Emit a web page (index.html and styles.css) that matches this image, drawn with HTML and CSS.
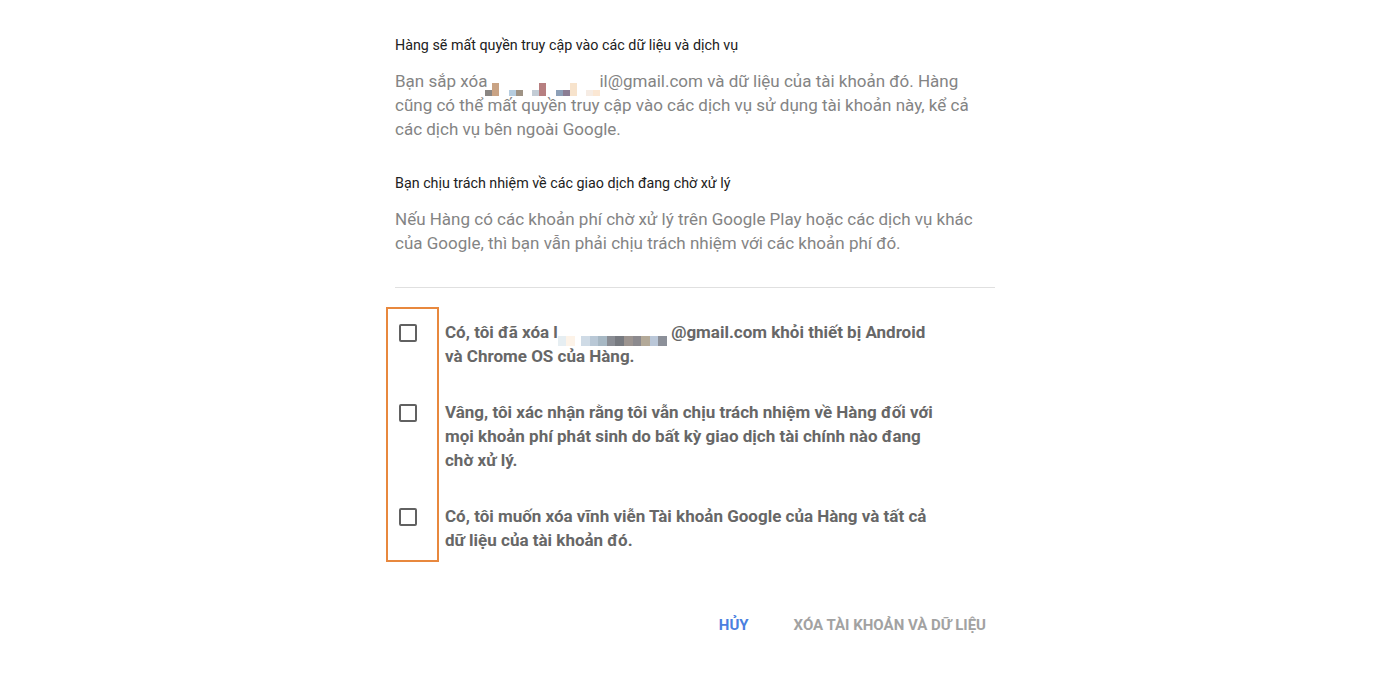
FILE: index.html
```html
<!DOCTYPE html>
<html lang="vi">
<head>
    <meta charset="utf-8">
    <title>Xóa Tài khoản Google</title>
    <link rel="stylesheet" href="styles.css">
</head>
<body>
    <div id="dialog">
        <div class="section">
            <div class="section-title">Hàng sẽ mất quyền truy cập vào các dữ liệu và dịch vụ</div>
            <div class="section-text">Bạn sắp xóa<span class="blur"><i class="px lo" style="background:#8a8683"></i><i class="px hi" style="background:#c9a384"></i><i class="sp"></i><i class="px lo" style="background:#b6cde0"></i><i class="px lo" style="background:#9f9385"></i><i class="sp"></i><i class="px lo" style="background:#c3ccd5"></i><i class="px hi" style="background:#b77f80"></i><i class="sp"></i><i class="px lo" style="background:#8da0b8"></i><i class="px lo" style="background:#8b7d93"></i><i class="px hi" style="background:#f7e3cc"></i><i class="sp"></i><i class="px lo" style="background:#f6ece4"></i><i class="px lo" style="background:#fbe7d3"></i></span>il@gmail.com và dữ liệu của tài khoản đó. Hàng cũng có thể mất quyền truy cập vào các dịch vụ sử dụng tài khoản này, kể cả các dịch vụ bên ngoài Google.</div>
        </div>
        <div class="section">
            <div class="section-title">Bạn chịu trách nhiệm về các giao dịch đang chờ xử lý</div>
            <div class="section-text">Nếu Hàng có các khoản phí chờ xử lý trên Google Play hoặc các dịch vụ khác của Google, thì bạn vẫn phải chịu trách nhiệm với các khoản phí đó.</div>
        </div>

        <div class="divider"></div>

        <div id="confirm-list">
            <div class="highlight"></div>
            <label class="confirm-row">
                <span class="checkbox"></span>
                <span class="confirm-text">Có, tôi đã xóa l<span class="blur mid"><i class="px md" style="background:#e6eef2"></i><i class="px md" style="background:#fdf3e8"></i><i class="sp2"></i><i class="px md" style="background:#cfdbe6"></i><i class="px md" style="background:#b9c8d6"></i><i class="px md" style="background:#a7b8c4"></i><i class="px md" style="background:#8a8d94"></i><i class="px md" style="background:#777a80"></i><i class="px md" style="background:#9c9490"></i><i class="px md" style="background:#8c8a8e"></i><i class="px md" style="background:#b3a998"></i><i class="px md" style="background:#bac7d8"></i><i class="px md" style="background:#8c9099"></i></span> @gmail.com khỏi thiết bị Android và Chrome OS của Hàng.</span>
            </label>
            <label class="confirm-row">
                <span class="checkbox"></span>
                <span class="confirm-text">Vâng, tôi xác nhận rằng tôi vẫn chịu trách nhiệm về Hàng đối với mọi khoản phí phát sinh do bất kỳ giao dịch tài chính nào đang chờ xử lý.</span>
            </label>
            <label class="confirm-row">
                <span class="checkbox"></span>
                <span class="confirm-text">Có, tôi muốn xóa vĩnh viễn Tài khoản Google của Hàng và tất cả dữ liệu của tài khoản đó.</span>
            </label>
        </div>

        <div class="actions">
            <div class="btn btn-cancel">Hủy</div>
            <div class="btn btn-disabled">Xóa tài khoản và dữ liệu</div>
        </div>
    </div>
</body>
</html>
```

FILE: styles.css
```css
body {
    margin: 0;
    background-color: white;
    font-family: Roboto, "Noto Sans", Arial, sans-serif;
}
#dialog {
    width: 600px;
    margin-left: 395px;
    padding-top: 35px;
}
.section {
    margin-bottom: 32px;
}
.section-title {
    font-size: 14.3px;
    line-height: 20px;
    color: #212121;
    margin-bottom: 14px;
}
.section-text {
    font-size: 17px;
    line-height: 24px;
    color: #848484;
}
.blur {
    display: inline-block;
    height: 14px;
    vertical-align: -3px;
    margin-left: -2px;
    margin-right: -1px;
}
.blur.mid {
    margin: 0;
    vertical-align: -2px;
    height: 12px;
}
.px {
    display: inline-block;
    width: 7px;
    vertical-align: bottom;
}
.px.lo { height: 6px; }
.px.hi { height: 13px; }
.px.md { height: 10px; width: 8.6px; }
.sp {
    display: inline-block;
    width: 9.5px;
}
.sp2 {
    display: inline-block;
    width: 6px;
}
.divider {
    border-top: 1px solid #e0e0e0;
    margin-bottom: 32px;
}
#confirm-list {
    position: relative;
    display: flex;
    flex-direction: column;
    gap: 32px;
}
.highlight {
    position: absolute;
    left: -9px;
    top: -13px;
    width: 49px;
    height: 251px;
    border: 2px solid #e8883e;
    pointer-events: none;
}
.confirm-row {
    display: flex;
    align-items: flex-start;
    gap: 28px;
    cursor: pointer;
}
.checkbox {
    flex: none;
    width: 14px;
    height: 14px;
    margin: 4px 0 0 4px;
    border: 2px solid #616161;
    border-radius: 2px;
}
.confirm-text {
    width: 495px;
    font-size: 17px;
    line-height: 24px;
    font-weight: bold;
    color: #676767;
}
.actions {
    display: flex;
    justify-content: flex-end;
    gap: 29px;
    margin-top: 55px;
    padding-right: 1px;
}
.btn {
    height: 36px;
    line-height: 36px;
    padding: 0 8px;
    font-size: 15px;
    font-weight: bold;
    text-transform: uppercase;
    cursor: pointer;
}
.btn-cancel {
    color: #4b7fe0;
}
.btn-disabled {
    color: #a2a2a2;
    cursor: default;
}
```
